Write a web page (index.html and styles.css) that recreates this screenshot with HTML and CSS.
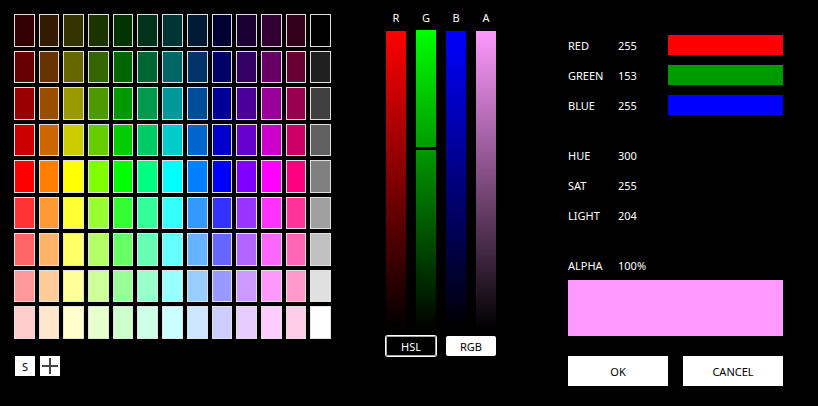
FILE: index.html
```html
<!DOCTYPE html>
<html lang="en">
<head>
<meta charset="utf-8">
<title>Color picker</title>
<link rel="stylesheet" href="styles.css">
</head>
<body>
<main class="picker">
  <section class="palette">
    <div class="swatches" id="swatches"></div>
    <div class="tools">
      <button class="tool label" type="button">S</button>
      <button class="tool" type="button" aria-label="Add">
        <svg class="plus" viewBox="0 0 20 20" aria-hidden="true"><path d="M10 2v16M2 10h16"/></svg>
      </button>
    </div>
  </section>

  <section class="mixer">
    <div class="channels">
      <div class="channel"><label for="r">R</label><input class="slider red" id="r" type="range" min="0" max="255" value="255"></div>
      <div class="channel"><label for="g">G</label><input class="slider green" id="g" type="range" min="0" max="255" value="153"></div>
      <div class="channel"><label for="b">B</label><input class="slider blue" id="b" type="range" min="0" max="255" value="255"></div>
      <div class="channel"><label for="a">A</label><input class="slider alpha" id="a" type="range" min="0" max="255" value="255"></div>
    </div>
    <div class="modes">
      <button class="mode mode-off label" type="button">HSL</button>
      <button class="mode label" type="button">RGB</button>
    </div>
  </section>

  <section class="details">
    <dl class="group">
      <div class="row"><dt class="label">RED</dt><dd class="label">255</dd><dd class="bar bar-red"></dd></div>
      <div class="row"><dt class="label">GREEN</dt><dd class="label">153</dd><dd class="bar bar-green"></dd></div>
      <div class="row"><dt class="label">BLUE</dt><dd class="label">255</dd><dd class="bar bar-blue"></dd></div>
    </dl>
    <dl class="group">
      <div class="row"><dt class="label">HUE</dt><dd class="label">300</dd></div>
      <div class="row"><dt class="label">SAT</dt><dd class="label">255</dd></div>
      <div class="row"><dt class="label">LIGHT</dt><dd class="label">204</dd></div>
    </dl>
    <dl class="group">
      <div class="row"><dt class="label">ALPHA</dt><dd class="label">100%</dd></div>
    </dl>
    <div class="preview"></div>
    <div class="actions">
      <button class="action label" type="button">OK</button>
      <button class="action label" type="button">CANCEL</button>
    </div>
  </section>
</main>
<script src="palette.js"></script>
</body>
</html>
```
FILE: styles.css
```css
* {
  box-sizing: border-box;
}

body {
  margin: 0;
  background: #000;
  color: #fff;
  font: 11px/20px "Noto Sans", "Open Sans", sans-serif;
}

button {
  margin: 0;
  padding: 0;
  border: 0;
  background: #fff;
  color: #000;
  font: inherit;
}

.label {
  padding-top: 2px;
  line-height: 18px;
}

.picker {
  display: grid;
  grid-template-columns: 372fr 110px 287fr;
  padding: 0 35px 0 14px;
}

.palette {
  margin-right: 55px;
  padding-top: 14px;
}

.swatches {
  display: grid;
  grid-template-columns: repeat(13, 1fr);
  grid-template-rows: repeat(9, 1fr);
  gap: 4px;
  height: 325px;
}

.swatch {
  border: 1px solid #e0e0e0;
}

.tools {
  display: flex;
  gap: 5px;
  padding: 17px 1px 0;
}

.tool {
  width: 20px;
  height: 20px;
}

.plus {
  display: block;
  fill: none;
  stroke: #444;
  stroke-width: 2;
}

.mixer {
  padding-top: 8px;
}

.channels {
  display: flex;
  justify-content: space-between;
}

.channel {
  display: flex;
  flex-direction: column;
  align-items: center;
}

.slider {
  appearance: none;
  writing-mode: vertical-lr;
  direction: rtl;
  width: 20px;
  height: 300px;
  margin: 0;
  background-color: #000;
  background-position: 0 2px;
  background-repeat: no-repeat;
}

.slider::-webkit-slider-thumb {
  appearance: none;
  width: 20px;
  height: 3px;
  background: #000;
}

.red {
  background-image: linear-gradient(#f00, #000);
}

.green {
  background-image: linear-gradient(#0f0, #000);
}

.blue {
  background-image: linear-gradient(#00f, #000);
}

.alpha {
  background-image: linear-gradient(#f9f, #000);
}

.modes {
  display: flex;
  gap: 10px;
  padding-top: 8px;
}

.mode {
  flex: 1;
  height: 20px;
  border-radius: 2px;
}

.mode-off {
  background: #000;
  color: #fff;
  box-shadow: 0 0 0 1px #fff, inset 0 0 0 1px #aaa;
}

.details {
  margin-left: 72px;
  padding-top: 30px;
}

.group {
  margin: 0 0 20px;
}

.group:last-of-type {
  margin: 0;
}

.row {
  display: grid;
  grid-template-columns: 50px 50px 1fr;
  align-items: center;
  height: 30px;
}

.row dd {
  margin: 0;
}

.bar {
  height: 20px;
}

.bar-red {
  background: #f00;
}

.bar-green {
  background: #090;
}

.bar-blue {
  background: #00f;
}

.preview {
  height: 56px;
  background: #f9f;
}

.actions {
  display: flex;
  gap: 15px;
  margin-top: 20px;
}

.action {
  flex: 1;
  height: 30px;
}
```
FILE: palette.js
```js
const hues = [
  [255, 0, 0], [255, 128, 0], [255, 255, 0], [128, 255, 0],
  [0, 255, 0], [0, 255, 128], [0, 255, 255], [0, 128, 255],
  [0, 0, 255], [128, 0, 255], [255, 0, 255], [255, 0, 128]
];
const box = document.getElementById("swatches");

function add(rgb) {
  const button = document.createElement("button");
  button.type = "button";
  button.className = "swatch";
  button.style.backgroundColor = `rgb(${rgb.join(",")})`;
  button.setAttribute("aria-label", `Color ${rgb.join(" ")}`);
  box.append(button);
}

for (let row = 0; row < 9; row++) {
  // Shades up to the pure hue in the fifth row, tints after it.
  for (const hue of hues) {
    add(hue.map(c => Math.round(row < 4 ? c * (row + 1) / 5 : c + (255 - c) * (row - 4) / 5)));
  }
  const gray = Math.min(255, row * 32);
  add([gray, gray, gray]);
}
```
